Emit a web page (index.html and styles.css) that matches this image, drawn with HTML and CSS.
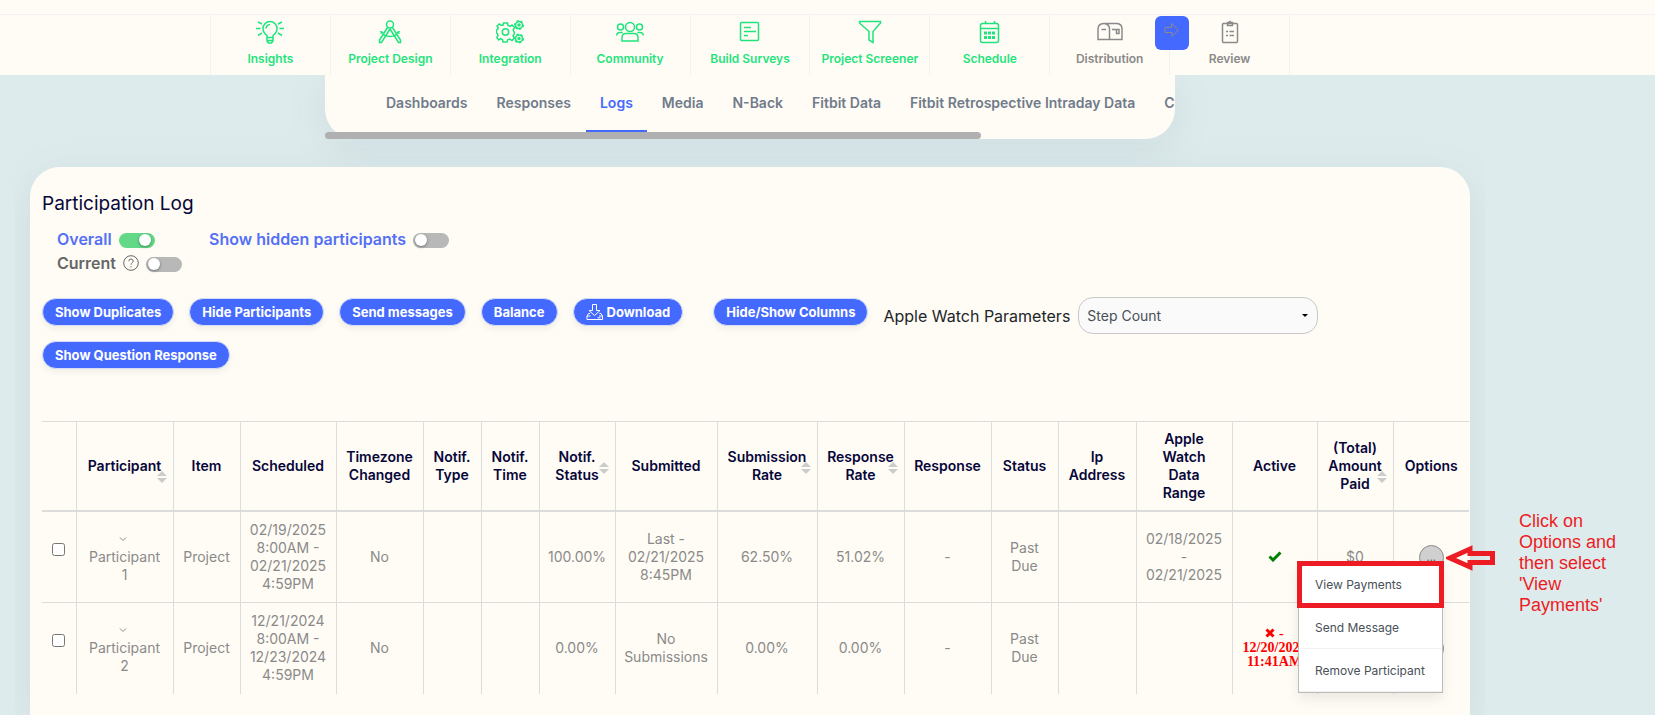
FILE: index.html
```html
<!DOCTYPE html>
<html lang="en">
<head>
  <meta charset="UTF-8">
  <meta name="viewport" content="width=device-width, initial-scale=1.0">
  <title>Participation Log</title>
  <link rel="stylesheet" href="styles.css">
</head>
<body>
  <!-- Project steps -->
  <header class="topbar">
    <nav class="steps">
      <a class="step" href="#">
        <svg class="step-icon" width="28" height="24" viewBox="0 0 28 24">
          <path d="M11 17.500v-2c-2-1.500-4-3.500-4-7a7 7 0 0 1 14 0c0 3.500-2 5.500-4 7v2zM11 17.500v3.500l1.500 2h3l1.500-2v-3.500M11 20.500h6M10 8.500a4.500 4.500 0 0 1 4-4M0 8.500h4.500M23.500 8.500H28M2 2l4 2M26 2l-4 2M2 15.500l4-2.500M26 15.500l-4-2.500"/>
        </svg>
        Insights
      </a>
      <a class="step" href="#">
        <svg class="step-icon" width="28" height="24" viewBox="0 0 28 24">
          <circle cx="14" cy="4.500" r="3.500"/>
          <path d="M11.500 7.500L3.500 20v2.500h2L14 9l8.500 13.500h2V20l-8-12.500M4.500 11q3 5.500 9.500 5.500T23.500 11M4.500 13.500L7 12M23.500 13.500L21 12"/>
        </svg>
        Project Design
      </a>
      <a class="step" href="#">
        <svg class="step-icon" width="28" height="24" viewBox="0 0 28 24">
          <path d="M7.500 3h4l.5 2.500 2 .8 2-1.300 2.500 2.500-1.300 2.300.8 2 .5 1.500-.5 1.200-1 1.500 1.500 2-2.500 2.500-2.500-1.500-1.800.8-.7 2.200h-4l-.5-2.500-2-.8L2.800 20 .8 17.500 2 15.500 1.400 13.700.5 13v-3l1.200-.8.5-1.700L1 6l2.200-2 2 1.300L7 5.300z"/>
          <circle cx="9.500" cy="12" r="3.200"/>
          <circle class="dash-gear" cx="23" cy="5" r="4"/><circle cx="23" cy="5" r="3.500"/><circle cx="23" cy="5" r="1"/>
          <circle class="dash-gear" cx="23" cy="18.500" r="4"/><circle cx="23" cy="18.500" r="3.500"/><circle cx="23" cy="18.500" r="1"/>
        </svg>
        Integration
      </a>
      <a class="step" href="#">
        <svg class="step-icon" width="28" height="24" viewBox="0 0 28 24">
          <circle cx="14" cy="7" r="4.500"/><circle cx="4.500" cy="7" r="3"/><circle cx="23.500" cy="7" r="3"/>
          <path d="M6 21v-3.500q0-4 4-4h8q4 0 4 4V21zM.700 15.500q0-3 3.500-3h2.500M27.300 15.500q0-3-3.500-3h-2.500"/>
        </svg>
        Community
      </a>
      <a class="step" href="#">
        <svg class="step-icon" width="28" height="24" viewBox="0 0 28 24">
          <rect x="4.500" y="2.500" width="18" height="18" rx="1"/>
          <path d="M8 7.500h7M8 11.500h12M8 15.500h4"/>
        </svg>
        Build Surveys
      </a>
      <a class="step" href="#">
        <svg class="step-icon" width="28" height="24" viewBox="0 0 28 24">
          <path d="M3.500 1.500h21V3L17 11.500V22.500l-4-2.500v-8.500L3.500 3z"/>
        </svg>
        Project Screener
      </a>
      <a class="step" href="#">
        <svg class="step-icon" width="28" height="24" viewBox="0 0 28 24">
          <rect x="4.500" y="3.500" width="18" height="19" rx="2"/>
          <path d="M4.500 8.500h18M9.500 1v3M18.500 1v3"/>
          <path class="calendar-days" d="M8 13h11.500M8 17.500h11.500"/>
        </svg>
        Schedule
      </a>
      <a class="step step-pending" href="#">
        <svg class="step-icon" width="28" height="24" viewBox="0 0 28 24">
          <path d="M2 19.500V9q0-5 5.500-5.500H21q5 .5 5 5.500v10.500zM8 3.500q5.500.5 5.500 5.500v10.500M5.500 9.500H10M16 9.500h7v4h-2.500v-4"/>
        </svg>
        Distribution
      </a>
      <a class="step step-pending" href="#">
        <svg class="step-icon" width="28" height="24" viewBox="0 0 28 24">
          <rect x="6.500" y="3.500" width="15" height="19" rx="1"/>
          <path d="M11.500 5.500v-3H13q1-2 2 0h1.500v3zM10 11.500h2M13.500 11.500H18M10 15.500h2M13.500 15.500H18"/>
        </svg>
        Review
      </a>
      <button class="next-button" type="button" aria-label="Next">
        <svg width="16" height="16" viewBox="0 0 16 16"><path d="M1 5.500h6.500v-4L14.500 8l-6.500 6.500v-4H1z"/></svg>
      </button>
    </nav>
  </header>

  <div class="layout">
    <main class="content">
      <div class="tabs-panel">
        <nav class="tabs">
          <a class="tab" href="#">Dashboards</a>
          <a class="tab" href="#">Responses</a>
          <a class="tab tab-active" href="#">Logs</a>
          <a class="tab" href="#">Media</a>
          <a class="tab" href="#">N-Back</a>
          <a class="tab" href="#">Fitbit Data</a>
          <a class="tab" href="#">Fitbit Retrospective Intraday Data</a>
          <a class="tab" href="#">C</a>
        </nav>
        <div class="tabs-scrollbar"></div>
      </div>

      <section class="card">
        <h1>Participation Log</h1>

        <div class="toggles">
          <div class="toggle-column">
            <label class="toggle-row toggle-blue">Overall <input class="toggle" type="checkbox" checked></label>
            <label class="toggle-row">Current
              <svg class="help-icon" width="16" height="16" viewBox="0 0 16 16">
                <circle cx="8" cy="8" r="7.300"/>
                <path d="M5.800 6.200q0-2.200 2.200-2.200t2.200 2q0 1-1.100 1.700T8 9.700M8 11.200v1.200"/>
              </svg>
              <input class="toggle" type="checkbox">
            </label>
          </div>
          <label class="toggle-row toggle-blue">Show hidden participants <input class="toggle" type="checkbox"></label>
        </div>

        <div class="actions">
          <button class="pill" type="button">Show Duplicates</button>
          <button class="pill" type="button">Hide Participants</button>
          <button class="pill" type="button">Send messages</button>
          <button class="pill" type="button">Balance</button>
          <button class="pill pill-download" type="button">
            <svg width="18" height="18" viewBox="0 0 18 18">
              <path d="M6.500 1.500h4v6h3.500l-5.500 5-5.500-5h3.500zM4 10.500H2.500L1 13v3.500h15.500V13L15 10.500h-1.500M1 13h3.500M13 13h3.500M11.500 14.800h3"/>
            </svg>
            Download
          </button>
          <button class="pill" type="button">Hide/Show Columns</button>
          <div class="field">
            <label for="watchParams">Apple Watch Parameters</label>
            <span class="select-wrap">
              <select id="watchParams">
                <option>Step Count</option>
              </select>
            </span>
          </div>
          <button class="pill" type="button">Show Question Response</button>
        </div>

        <table class="log">
          <colgroup>
            <col class="w-34"><col class="w-97"><col class="w-67"><col class="w-96"><col class="w-87"><col class="w-58">
            <col class="w-58"><col class="w-76"><col class="w-102"><col class="w-100"><col class="w-87"><col class="w-87">
            <col class="w-67"><col class="w-78"><col class="w-96"><col class="w-85"><col class="w-76"><col class="w-76">
          </colgroup>
          <thead>
            <tr>
              <th></th>
              <th class="sortable sort-low">Participant</th>
              <th>Item</th>
              <th>Scheduled</th>
              <th>Timezone Changed</th>
              <th>Notif. Type</th>
              <th>Notif. Time</th>
              <th class="sortable">Notif. Status</th>
              <th>Submitted</th>
              <th class="sortable">Submission Rate</th>
              <th class="sortable">Response Rate</th>
              <th>Response</th>
              <th>Status</th>
              <th>Ip Address</th>
              <th>Apple<br>Watch<br>Data<br>Range</th>
              <th>Active</th>
              <th class="sortable sort-low">(Total) Amount Paid</th>
              <th>Options</th>
            </tr>
          </thead>
          <tbody>
            <tr>
              <td><input class="row-check" type="checkbox" aria-label="Select Participant 1"></td>
              <td><svg class="chevron" width="8" height="5" viewBox="0 0 8 5"><path d="M1 .5l3 3 3-3"/></svg>Participant<br>1</td>
              <td>Project</td>
              <td>02/19/2025<br>8:00AM -<br>02/21/2025<br>4:59PM</td>
              <td>No</td>
              <td></td>
              <td></td>
              <td>100.00%</td>
              <td>Last -<br>02/21/2025<br>8:45PM</td>
              <td>62.50%</td>
              <td>51.02%</td>
              <td>-</td>
              <td>Past<br>Due</td>
              <td></td>
              <td>02/18/2025<br>-<br>02/21/2025</td>
              <td><svg class="check" width="14" height="11" viewBox="0 0 14 11"><path d="M1.500 5.500L5 9l7.500-7.500"/></svg></td>
              <td>$0</td>
              <td class="options-cell">
                <button class="options-button" type="button" aria-label="Options">...</button>
                <div class="menu">
                  <button class="menu-item" type="button">View Payments</button>
                  <button class="menu-item" type="button">Send Message</button>
                  <button class="menu-item" type="button">Remove Participant</button>
                  <div class="highlight"></div>
                </div>
              </td>
            </tr>
            <tr>
              <td><input class="row-check" type="checkbox" aria-label="Select Participant 2"></td>
              <td><svg class="chevron" width="8" height="5" viewBox="0 0 8 5"><path d="M1 .5l3 3 3-3"/></svg>Participant<br>2</td>
              <td>Project</td>
              <td>12/21/2024<br>8:00AM -<br>12/23/2024<br>4:59PM</td>
              <td>No</td>
              <td></td>
              <td></td>
              <td>0.00%</td>
              <td>No<br>Submissions</td>
              <td>0.00%</td>
              <td>0.00%</td>
              <td>-</td>
              <td>Past<br>Due</td>
              <td></td>
              <td></td>
              <td class="inactive"><svg class="cross" width="10" height="10" viewBox="0 0 10 10"><path d="M1.500 1.500l7 7M8.500 1.500l-7 7"/></svg> -<br>12/20/2024<br>11:41AM</td>
              <td></td>
              <td><button class="options-button" type="button" aria-label="Options">...</button></td>
            </tr>
          </tbody>
        </table>
      </section>
    </main>

    <aside class="note">
      <svg class="arrow" width="50" height="26" viewBox="0 0 50 26">
        <path d="M4 13L24 4v4.500h22.500v9H24V22z"/>
      </svg>
      Click on Options and then select 'View Payments'
    </aside>
  </div>
</body>
</html>
```

FILE: styles.css
```css
* {
  box-sizing: border-box;
}

body {
  margin: 0;
  min-height: 100vh;
  display: flex;
  flex-direction: column;
  background-color: #deebec;
  color: #212529;
  font-family: Inter, sans-serif;
  font-size: 14px;
}

a {
  text-decoration: none;
}

button,
select {
  font-family: inherit;
}

svg {
  fill: none;
  stroke: currentColor;
}

/* Top bar */
.topbar {
  padding: 14px 155px 0 0;
  height: 75px;
  background-color: #fffcf5;
}

.topbar::before {
  content: "";
  display: block;
  margin-right: -155px;
  border-top: 1px solid #f2f3f5;
}

.steps {
  position: relative;
  display: flex;
  width: 1080px;
  height: 60px;
  margin: 0 auto;
  border-left: 1px solid #f2f3f5;
}

.step {
  flex: 1;
  display: flex;
  flex-direction: column;
  align-items: center;
  gap: 7px;
  padding-top: 5px;
  border-right: 1px solid #f2f3f5;
  color: #1fe47d;
  font-size: 12px;
  line-height: 16px;
  font-weight: 600;
}

.step-pending {
  color: #8a8a8a;
}

.step-icon {
  stroke-width: 1.5;
}

.dash-gear {
  stroke-width: 2;
  stroke-dasharray: 2 2;
}

.calendar-days {
  stroke-width: 3;
  stroke-dasharray: 3 1;
}

.next-button {
  position: absolute;
  top: 1px;
  right: 101px;
  width: 34px;
  height: 34px;
  padding: 0 0 4px;
  border: 0;
  border-radius: 6px;
  background-color: #4469ff;
  color: #8a8a8a;
}

/* Page */
.layout {
  flex: 1;
  position: relative;
  display: flex;
}

.content {
  flex: 1;
  min-width: 0;
  margin: 0 15px;
  padding: 0 15px;
  display: flex;
  flex-direction: column;
  overflow: hidden;
}

.tabs-panel {
  position: relative;
  width: 850px;
  height: 64px;
  margin: 0 auto 28px;
  border-radius: 0 0 30px 30px;
  background-color: #fffcf5;
  box-shadow: 0 10px 40px rgba(68, 105, 130, 0.1);
}

.tabs {
  display: flex;
  gap: 1px;
  height: 57px;
  padding-left: 47px;
  overflow: hidden;
}

.tab {
  flex: none;
  padding: 18px 14px 0;
  border-bottom: 2px solid transparent;
  color: #707b8b;
  font-size: 14px;
  line-height: 20px;
  font-weight: 600;
}

.tab-active {
  border-color: #4469ff;
  color: #4469ff;
}

.tabs-scrollbar {
  position: absolute;
  left: 0;
  bottom: 0;
  width: 656px;
  height: 7px;
  border-radius: 4px;
  background-color: #b0b0b0;
}

.card {
  position: relative;
  flex: 1;
  padding: 23px 3px 20px 12px;
  border-radius: 30px 30px 0 0;
  background-color: #fffcf5;
  box-shadow: 0 10px 40px rgba(68, 105, 130, 0.1);
}

h1 {
  margin: 0;
  color: #06063a;
  font-size: 19px;
  line-height: 28px;
  font-weight: 400;
}

.toggles {
  display: flex;
  align-items: flex-start;
  gap: 27px;
  padding: 9px 15px 0;
}

.toggle-column {
  width: 125px;
}

.toggle-row {
  display: flex;
  align-items: center;
  gap: 7px;
  color: #666;
  font-size: 16px;
  line-height: 24px;
  font-weight: 600;
}

.toggle-blue {
  color: #5470f5;
}

.toggle {
  appearance: none;
  flex: none;
  width: 36px;
  height: 15px;
  margin: 3px 0 0;
  padding: 1px 2px;
  border-radius: 8px;
  background-color: #b8b8b8;
}

.toggle::before {
  content: "";
  display: block;
  width: 12px;
  height: 12px;
  border-radius: 50%;
  background-color: #fff;
  box-shadow: 0 1px 3px rgba(0, 0, 0, 0.4);
}

.toggle:checked {
  background-color: #63d987;
}

.toggle:checked::before {
  margin-left: 18px;
}

/* Buttons */
.actions {
  display: flex;
  flex-wrap: wrap;
  align-items: flex-start;
  gap: 6px 15px;
  margin-top: 22px;
}

.pill {
  display: flex;
  align-items: center;
  height: 28px;
  margin-top: 1px;
  padding: 0 12px;
  border: 1px solid #d5dcf5;
  border-radius: 14px;
  background-color: #4469ff;
  box-shadow: 0 3px 6px rgba(0, 0, 0, 0.06);
  color: #fff;
  font-size: 13px;
  line-height: 18px;
  font-weight: 700;
}

.pill-download {
  gap: 3px;
  margin-right: 15px;
}

.field {
  display: flex;
  align-items: center;
  gap: 8px;
  font-size: 16px;
}

.select-wrap {
  position: relative;
}

.select-wrap::after {
  content: "";
  position: absolute;
  right: 10px;
  top: 17px;
  border: 3px solid transparent;
  border-top-color: #000;
}

select {
  appearance: none;
  display: block;
  width: 240px;
  height: 37px;
  padding: 0 8px;
  border: 1px solid #c8c8c8;
  border-radius: 15px;
  background-color: #fafafa;
  color: #495057;
  font-size: 14px;
}

/* Log table */
.log {
  width: 100%;
  margin-top: 52px;
  table-layout: fixed;
  border-collapse: collapse;
  color: #8a8a8a;
  text-align: center;
  line-height: 18px;
}

.log th,
.log td {
  padding: 9px 0;
  border-top: 1px solid #dcdcdc;
  border-left: 1px solid #dcdcdc;
}

.log th:first-child,
.log td:first-child {
  border-left: 0;
}

.log th {
  position: relative;
  height: 89px;
  padding: 8px 5px;
  border-bottom: 2px solid #dcdcdc;
  color: #06063a;
  font-weight: 600;
}

.log td {
  height: 91px;
}

.sortable::before,
.sortable::after {
  content: "";
  position: absolute;
  right: 6px;
  border: 5px solid transparent;
}

.sortable::before {
  top: 35px;
  border-bottom-color: #ccc;
}

.sortable::after {
  top: 47px;
  border-top-color: #ccc;
}

.sort-low::before {
  top: 44px;
}

.sort-low::after {
  top: 56px;
}

.row-check {
  width: 13px;
  height: 13px;
  margin: 0 0 16px;
}

.chevron {
  display: block;
  margin: 7px auto 6px 42px;
}

.check {
  stroke: #008000;
  stroke-width: 3;
}

.log .inactive {
  color: #f00;
  font-family: "Liberation Serif", serif;
  font-size: 14px;
  line-height: 14px;
  font-weight: 700;
}

.cross {
  stroke-width: 3;
}

.log .options-cell {
  position: relative;
}

.options-button {
  width: 25px;
  height: 25px;
  padding: 0;
  border: 1px solid #8a8a8a;
  border-radius: 50%;
  background-color: #d0d0d0;
  color: #666;
  font-size: 11px;
  line-height: 14px;
}

.menu {
  position: absolute;
  z-index: 2;
  top: 50px;
  right: 26px;
  width: 145px;
  border: 1px solid #bbb;
  background-color: #fff;
  box-shadow: 0 6px 12px rgba(0, 0, 0, 0.08);
}

.menu-item {
  display: block;
  width: 100%;
  height: 43px;
  padding: 0 16px;
  border: 0;
  border-bottom: 1px solid #f2f2f2;
  background: none;
  color: #495057;
  font-size: 12px;
  text-align: left;
}

/* Walkthrough marks */
.highlight {
  position: absolute;
  top: -2px;
  left: -2px;
  right: -2px;
  height: 47px;
  border: 5px solid #ed1c24;
}

.note {
  position: relative;
  width: 155px;
  padding: 436px 30px 0 19px;
  color: #ed1c24;
  font-family: "Liberation Sans", sans-serif;
  font-size: 18px;
  line-height: 21px;
}

.arrow {
  position: absolute;
  top: 470px;
  left: -54px;
  stroke-width: 5;
}

.w-34 { width: 34px; }
.w-58 { width: 58px; }
.w-67 { width: 67px; }
.w-76 { width: 76px; }
.w-78 { width: 78px; }
.w-85 { width: 85px; }
.w-87 { width: 87px; }
.w-96 { width: 96px; }
.w-97 { width: 97px; }
.w-100 { width: 100px; }
.w-102 { width: 102px; }
```
